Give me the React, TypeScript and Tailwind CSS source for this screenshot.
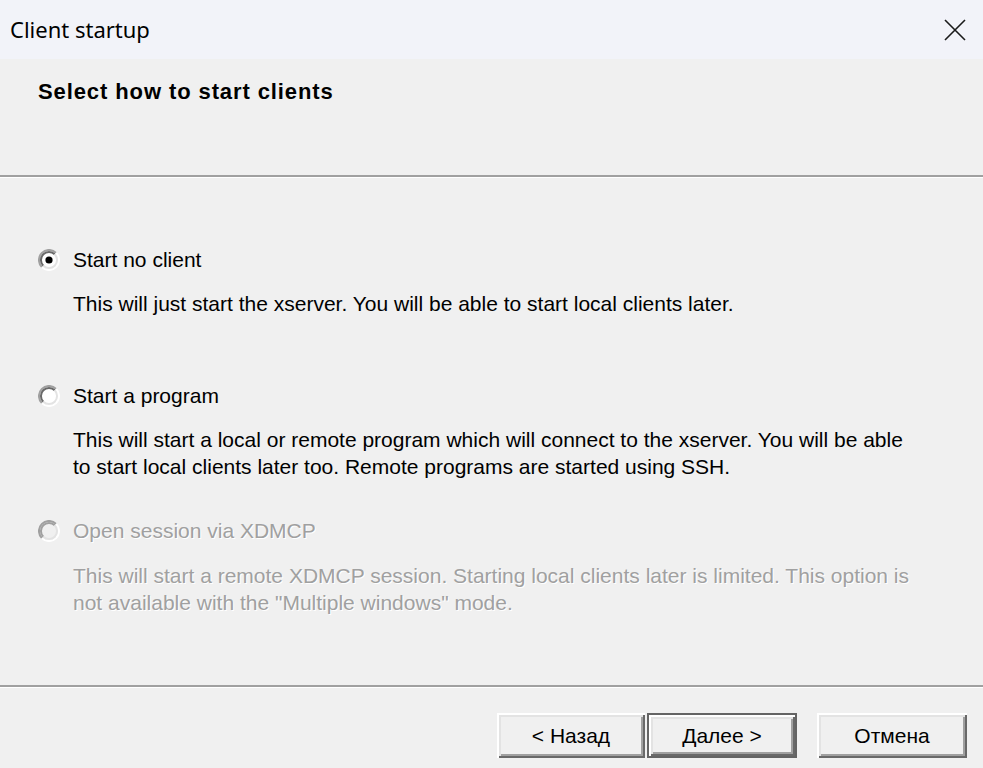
import React from "react";

const sans = { fontFamily: '"Liberation Sans", Arial, sans-serif' };

function Radio({ checked, disabled }: { checked?: boolean; disabled?: boolean }) {
  const dark = disabled ? "#a0a0a0" : "#696969";
  const mid = "#a0a0a0";
  return (
    <svg width="22" height="22" viewBox="0 0 22 22" className="shrink-0">
      <circle cx="11" cy="11" r="10" fill={disabled ? "#f0f0f0" : "#fff"} />
      <path d="M3.9 18.1 A10 10 0 0 1 18.1 3.9" stroke={mid} strokeWidth="2" fill="none" />
      <path d="M5.3 16.7 A8 8 0 0 1 16.7 5.3" stroke={dark} strokeWidth="2" fill="none" />
      <path d="M18.1 3.9 A10 10 0 0 1 3.9 18.1" stroke="#fff" strokeWidth="2" fill="none" />
      <path d="M16.7 5.3 A8 8 0 0 1 5.3 16.7" stroke="#e3e3e3" strokeWidth="2" fill="none" />
      {checked && <circle cx="11" cy="11" r="3.6" fill="#000" />}
    </svg>
  );
}

function Etched() {
  return (
    <div className="shrink-0">
      <div className="h-[2px] bg-[#a0a0a0]" />
      <div className="h-[1px] bg-white" />
    </div>
  );
}

function Btn({ children, def, w }: { children: React.ReactNode; def?: boolean; w: string }) {
  return (
    <button
      className={
        "h-[45px] bg-[#f0f0f0] text-[21px] text-black " +
        w +
        (def
          ? " shadow-[inset_0_0_0_2px_#646464,inset_2px_2px_0_2px_#fff,inset_-2px_-2px_0_2px_#696969,inset_4px_4px_0_2px_#e3e3e3,inset_-4px_-4px_0_2px_#a0a0a0]"
          : " shadow-[inset_2px_2px_0_#fff,inset_-2px_-2px_0_#696969,inset_4px_4px_0_#e3e3e3,inset_-4px_-4px_0_#a0a0a0]")
      }
      style={sans}
    >
      {children}
    </button>
  );
}

export default function App() {
  return (
    <div className="w-[983px] h-[768px] flex flex-col bg-[#f0f0f0] overflow-hidden">
      <div className="h-[59px] shrink-0 bg-[#f2f3f9] flex items-center justify-between pl-[10px] pr-[16px]">
        <span className="text-[22px] text-black" style={{ fontFamily: '"Noto Sans", "Open Sans", sans-serif' }}>
          Client startup
        </span>
        <svg width="24" height="24" viewBox="0 0 24 24">
          <path d="M2 2 L22 22 M22 2 L2 22" stroke="#1a1a1a" strokeWidth="1.6" />
        </svg>
      </div>

      <div className="h-[116px] shrink-0 pl-[38px] pt-[21px]">
        <div className="text-[22px] font-bold leading-[24px] tracking-[0.9px] text-black" style={sans}>
          Select how to start clients
        </div>
      </div>
      <Etched />

      <div className="h-[507px] shrink-0 pl-[38px] pr-[30px] text-[21px] leading-[27px] text-black" style={sans}>
        <div className="mt-[68px] flex items-center gap-[13px]">
          <Radio checked />
          <span>Start no client</span>
        </div>
        <div className="mt-[17px] pl-[35px]">
          This will just start the xserver. You will be able to start local clients later.
        </div>

        <div className="mt-[65px] flex items-center gap-[13px]">
          <Radio />
          <span>Start a program</span>
        </div>
        <div className="mt-[17px] pl-[35px] whitespace-nowrap">
          This will start a local or remote program which will connect to the xserver. You will be able
          <br />
          to start local clients later too. Remote programs are started using SSH.
        </div>

        <div className="mt-[37px] flex items-center gap-[13px] text-[#a0a0a0] [text-shadow:1px_1px_0_#fff]">
          <Radio disabled />
          <span>Open session via XDMCP</span>
        </div>
        <div className="mt-[18px] pl-[35px] whitespace-nowrap text-[#a0a0a0] [text-shadow:1px_1px_0_#fff]">
          This will start a remote XDMCP session. Starting local clients later is limited. This option is
          <br />
          not available with the "Multiple windows" mode.
        </div>
      </div>
      <Etched />

      <div className="flex-1 flex justify-end items-start pt-[25px] pr-[16px]">
        <div className="flex gap-[2px]">
          <Btn w="w-[148px]">&lt; Назад</Btn>
          <Btn def w="w-[150px]">Далее &gt;</Btn>
        </div>
        <div className="ml-[20px]">
          <Btn w="w-[150px]">Отмена</Btn>
        </div>
      </div>
    </div>
  );
}
